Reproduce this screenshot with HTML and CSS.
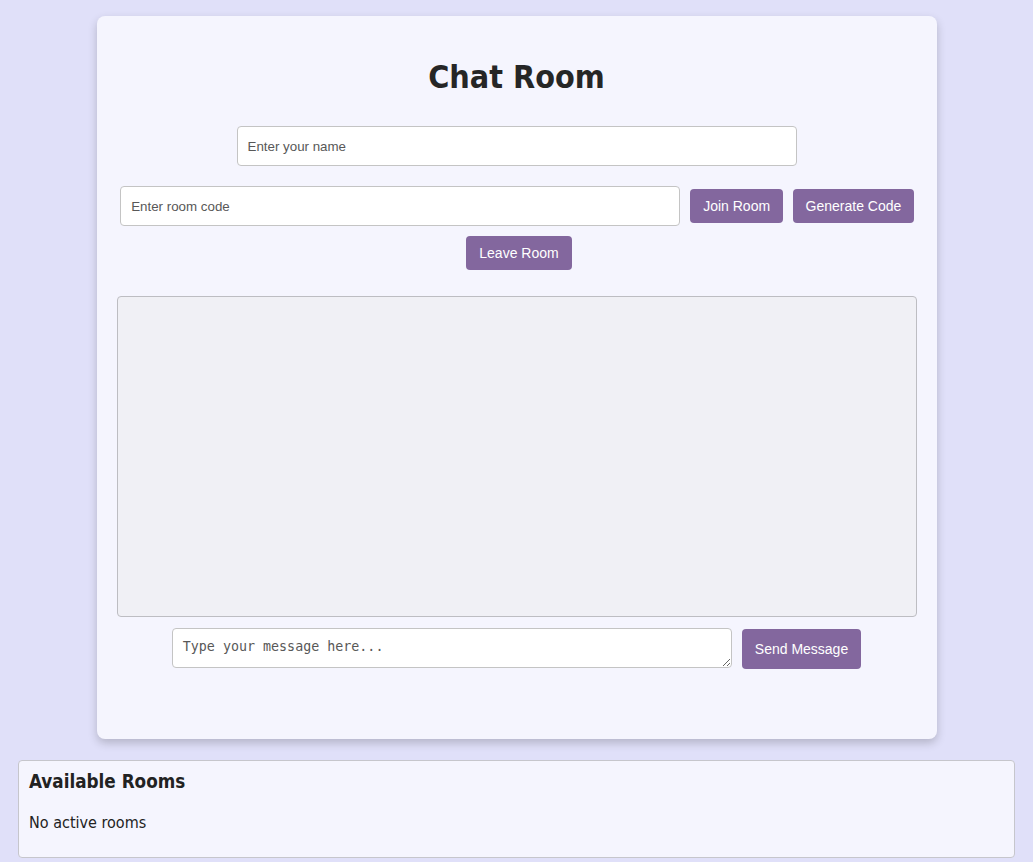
FILE: index.html
```html
<!DOCTYPE html>
<html lang="en">
<head>
<meta charset="utf-8">
<title>Chat Room</title>
<link rel="stylesheet" href="styles.css">
</head>
<body>
  <div class="card">
    <h1 class="title">Chat Room</h1>
    <div class="row row-name">
      <input class="field" type="text" placeholder="Enter your name">
    </div>
    <div class="row row-room">
      <input class="field" type="text" placeholder="Enter room code">
      <button class="btn">Join Room</button>
      <button class="btn btn-gen">Generate Code</button>
    </div>
    <div class="row row-leave">
      <button class="btn">Leave Room</button>
    </div>
    <div class="messages"></div>
    <div class="row row-send">
      <textarea class="field message" placeholder="Type your message here..."></textarea>
      <button class="btn btn-send">Send Message</button>
    </div>
  </div>
  <div class="rooms">
    <h3 class="rooms-title">Available Rooms</h3>
    <p class="rooms-empty">No active rooms</p>
  </div>
</body>
</html>
```

FILE: styles.css
```css
html, body {
  background: #e0e0f9;
}
body {
  margin: 8px;
  font-family: "DejaVu Sans Condensed", "DejaVu Sans", sans-serif;
  font-stretch: condensed;
  color: #222;
}
.card {
  width: 800px;
  margin: 8px auto 0;
  padding: 20px 20px 20px;
  background: #f5f5fe;
  border-radius: 8px;
  box-shadow: 0 4px 10px rgba(0, 0, 0, 0.2);
}
.title {
  margin: 23px 0 0;
  font-size: 32px;
  font-weight: bold;
  text-align: center;
  line-height: 37px;
  color: #262626;
}
.row {
  display: flex;
  justify-content: center;
  align-items: center;
  gap: 10px;
}
.row-name { margin-top: 30px; }
.row-room { margin-top: 20px; padding-left: 1px; }
.row-leave { margin-top: 10px; padding-left: 5px; }
.row-send {
  margin-top: 11px;
  margin-bottom: 50px;
  align-items: flex-start;
}
.field {
  box-sizing: border-box;
  width: 560px;
  height: 40px;
  margin: 0;
  padding: 10px;
  border: 1px solid #c4c4c4;
  border-radius: 4px;
  background: #fff;
  font-family: "Liberation Sans", Arial, sans-serif;
  font-size: 13.33px;
  color: #222;
}
.field::placeholder {
  color: #585858;
}
.message {
  font-family: "DejaVu Sans Mono", monospace;
  font-size: 13.33px;
  padding: 10px 10px 8px;
  resize: vertical;
}
.btn {
  box-sizing: border-box;
  height: 34px;
  padding: 0 13px;
  border: none;
  border-radius: 4px;
  background: #83679e;
  color: #fff;
  font-family: "Liberation Sans", Arial, sans-serif;
  font-size: 14px;
  cursor: pointer;
}
.btn-gen {
  padding: 0 12.5px;
}
.btn-send {
  height: 40px;
  margin-top: 1px;
  padding: 0 13px;
}
.messages {
  box-sizing: border-box;
  height: 321px;
  margin-top: 26px;
  border: 1px solid #bdbdc2;
  border-radius: 4px;
  background: #f0f0f5;
}
.rooms {
  margin: 21px 10px 0;
  padding: 10px;
  border: 1px solid #c6c6cc;
  border-radius: 4px;
  background: #f5f5fe;
}
.rooms-title {
  margin: 0 0 20.5px;
  font-size: 18.72px;
  font-weight: bold;
}
.rooms-empty {
  margin: 16px 0 15px;
  font-size: 16px;
}
```
